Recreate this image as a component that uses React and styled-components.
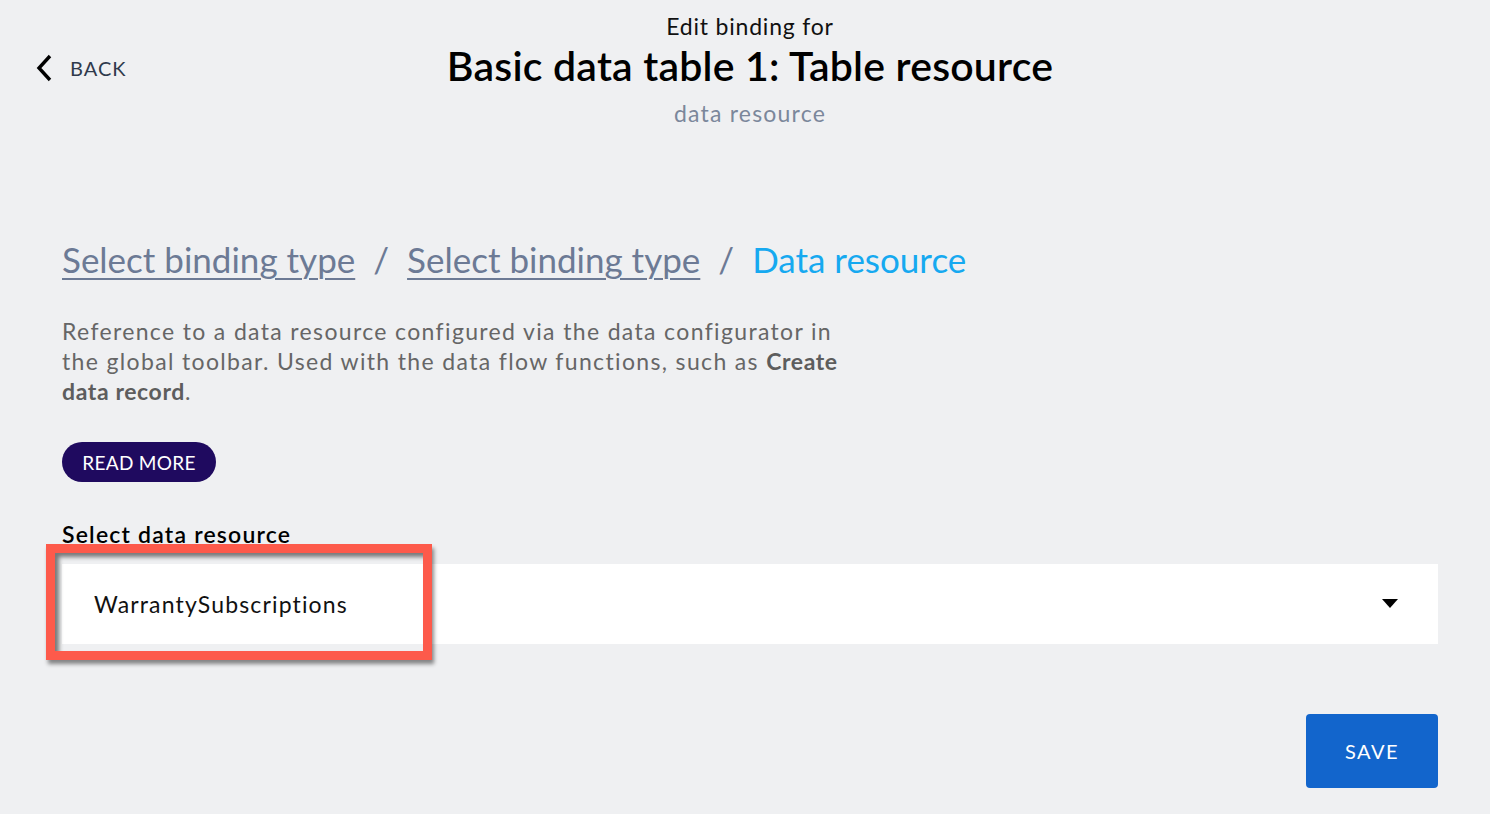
import React from "react";
import styled, { createGlobalStyle } from "styled-components";

const Global = createGlobalStyle`
  html, body {
    margin: 0;
    padding: 0;
    background: #eff0f2;
    font-family: Lato, "Open Sans", sans-serif;
  }
`;

const Page = styled.div`
  width: 1490px;
  height: 814px;
  box-sizing: border-box;
  padding: 0 52px 0 62px;
  display: flex;
  flex-direction: column;
`;

const Header = styled.header`
  position: relative;
  display: flex;
  flex-direction: column;
  align-items: center;
  padding: 11px 0 0 10px;
  margin: 0 -52px 0 -62px;
  .over {
    font-size: 23px;
    line-height: 30px;
    letter-spacing: 0.8px;
    color: #111;
  }
  .title {
    font-size: 41px;
    font-weight: 600;
    line-height: 48px;
    letter-spacing: 0.2px;
    margin-top: 1px;
    color: #000;
  }
  .sub {
    font-size: 23px;
    line-height: 30px;
    letter-spacing: 1.2px;
    margin-top: 8px;
    color: #7b879b;
  }
`;

const Back = styled.button`
  position: absolute;
  left: 34px;
  top: 54px;
  display: flex;
  align-items: center;
  gap: 16px;
  background: none;
  border: 0;
  padding: 0;
  font-family: inherit;
  font-size: 20px;
  letter-spacing: 1px;
  color: #2f3a4c;
  cursor: pointer;
`;

const Crumbs = styled.nav`
  margin-top: 108px;
  display: flex;
  align-items: baseline;
  gap: 18px;
  font-size: 35px;
  line-height: 46px;
  a {
    color: #6c7a95;
    text-decoration: underline;
    text-decoration-thickness: 2px;
    text-underline-offset: 5px;
  }
  .sep {
    color: #6c7a95;
  }
  .current {
    color: #16a9f0;
  }
`;

const Description = styled.p`
  margin: 34px 0 0;
  width: 790px;
  font-size: 23px;
  line-height: 30px;
  letter-spacing: 1.35px;
  color: #666;
  b {
    font-weight: 700;
    letter-spacing: 0.6px;
    color: #5d5d5d;
  }
`;

const ReadMore = styled.button`
  margin-top: 36px;
  align-self: flex-start;
  height: 40px;
  width: 154px;
  border-radius: 20px;
  border: 0;
  background: #1f0a5f;
  color: #fff;
  font-family: inherit;
  font-size: 19px;
  letter-spacing: 0.3px;
  cursor: pointer;
`;

const Label = styled.div`
  margin-top: 38px;
  font-size: 23px;
  font-weight: 600;
  line-height: 28px;
  letter-spacing: 1.2px;
  color: #000;
`;

const SelectWrap = styled.div`
  position: relative;
  margin-top: 16px;
  height: 80px;
  background: #fff;
  display: flex;
  align-items: center;
  justify-content: space-between;
  padding: 0 40px 0 32px;
  .value {
    font-size: 23px;
    letter-spacing: 1.15px;
    color: #111;
  }
`;

const Highlight = styled.div`
  position: absolute;
  left: -16px;
  top: -20px;
  width: 386px;
  height: 116px;
  box-sizing: border-box;
  border: 9px solid #fd5a4b;
  box-shadow: 2px 4px 4px rgba(0, 0, 0, 0.45),
    inset 4px 4px 4px rgba(0, 0, 0, 0.5);
  pointer-events: none;
`;

const Footer = styled.div`
  margin-top: 70px;
  display: flex;
  justify-content: flex-end;
`;

const Save = styled.button`
  width: 132px;
  height: 74px;
  border: 0;
  border-radius: 4px;
  background: #1265cc;
  color: #fff;
  font-family: inherit;
  font-size: 20px;
  letter-spacing: 1.5px;
  cursor: pointer;
`;

function Chevron() {
  return (
    <svg width="20" height="28" viewBox="0 0 20 28">
      <path d="M16 2 L5 14 L16 26" fill="none" stroke="#000" strokeWidth="3.4" />
    </svg>
  );
}

function Caret() {
  return (
    <svg width="16" height="10" viewBox="0 0 16 10">
      <path d="M0 0 H16 L8 9 Z" fill="#000" />
    </svg>
  );
}

export default function App() {
  return (
    <>
      <Global />
      <Page>
        <Header>
          <Back>
            <Chevron />
            BACK
          </Back>
          <div className="over">Edit binding for</div>
          <div className="title">Basic data table 1: Table resource</div>
          <div className="sub">data resource</div>
        </Header>

        <Crumbs>
          <a href="#type">Select binding type</a>
          <span className="sep">/</span>
          <a href="#type2">Select binding type</a>
          <span className="sep">/</span>
          <span className="current">Data resource</span>
        </Crumbs>

        <Description>
          Reference to a data resource configured via the data configurator in
          the global toolbar. Used with the data flow functions, such as{" "}
          <b>Create data record</b>.
        </Description>

        <ReadMore>READ MORE</ReadMore>

        <Label>Select data resource</Label>
        <SelectWrap>
          <span className="value">WarrantySubscriptions</span>
          <Caret />
          <Highlight />
        </SelectWrap>

        <Footer>
          <Save>SAVE</Save>
        </Footer>
      </Page>
    </>
  );
}
